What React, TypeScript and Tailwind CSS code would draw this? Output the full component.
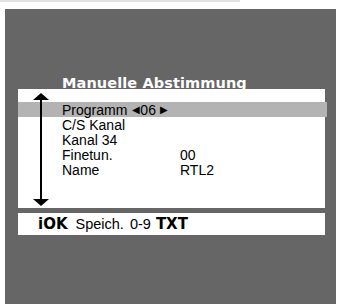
import React from "react";

const rows: [string, string][] = [
  ["C/S Kanal", ""],
  ["Kanal 34", ""],
  ["Finetun.", "00"],
  ["Name", "RTL2"],
];

export default function App() {
  return (
    <div className="w-[340px] h-[304px] bg-white overflow-hidden" style={{ fontFamily: '"Liberation Sans", Arial, sans-serif' }}>
      <div className="h-[2px] w-[240px] bg-[#e2e2e2]" />
      <div className="ml-[5px] mt-[7px] w-[331px] h-[295px] bg-[#666666] pl-[13px] pt-[67px]">
        <div className="pl-[44px] h-[13px] flex items-end">
          <span className="text-white font-bold text-[14.5px] leading-none tracking-[0.1px] translate-y-[1px]" style={{ fontFamily: '"DejaVu Sans", sans-serif' }}>
            Manuelle Abstimmung
          </span>
        </div>
        <div className="relative w-[307px] h-[119px] bg-white pt-[13px] text-[14px] text-black">
          <div className="h-[15px] bg-[#b3b3b3] w-[309px] flex items-center pl-[44px] leading-none">
            <span>Programm</span>
            <span className="ml-[5px] text-[10px]">◀</span>
            <span>06</span>
            <span className="ml-[4px] text-[10px]">▶</span>
          </div>
          {rows.map(([a, b]) => (
            <div key={a} className="h-[15px] flex items-center pl-[44px] leading-none">
              <span className="w-[118px]">{a}</span>
              <span>{b}</span>
            </div>
          ))}
          <svg className="absolute left-[14px] top-[4px]" width="18" height="113" viewBox="0 0 18 113">
            <line x1="9" y1="5" x2="9" y2="108" stroke="black" strokeWidth="2" />
            <polygon points="9,0 1,7 17,7" fill="black" />
            <polygon points="9,113 1,106 17,106" fill="black" />
          </svg>
        </div>
        <div className="mt-[5px] w-[307px] h-[22px] bg-white flex items-center pl-[20px] text-[14.5px] text-black leading-none">
          <span className="font-bold text-[15px]" style={{ fontFamily: '"DejaVu Sans", sans-serif' }}>iOK</span>
          <span className="ml-[8px]">Speich.</span>
          <span className="ml-[6px]">0-9</span>
          <span className="ml-[5px] font-bold text-[15px]" style={{ fontFamily: '"DejaVu Sans", sans-serif' }}>TXT</span>
        </div>
      </div>
    </div>
  );
}
